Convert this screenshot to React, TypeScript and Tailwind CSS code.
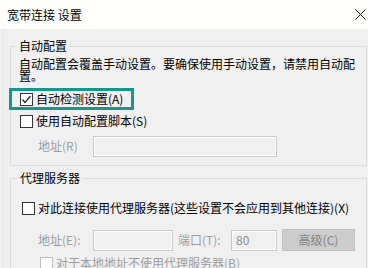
import React from 'react';

const font = "font-['Microsoft_YaHei','Noto_Sans_CJK_SC',sans-serif]";

const CheckBox: React.FC<{ checked?: boolean; disabled?: boolean }> = ({ checked, disabled }) => (
  <span
    className={`flex h-[13px] w-[13px] shrink-0 items-center justify-center border bg-white ${
      disabled ? 'border-[#bcbcbc]' : 'border-[#333333]'
    }`}
  >
    {checked && (
      <svg width="11" height="11" viewBox="0 0 11 11">
        <path d="M1.5 5.5 L4 8.5 L9.5 2" fill="none" stroke="#222" strokeWidth="1.2" />
      </svg>
    )}
  </span>
);

const TextBox: React.FC<{ w: string; value?: string }> = ({ w, value }) => (
  <div
    className={`${w} h-[21px] border border-[#c8c8c8] bg-[#f0f0f0] px-[4px] text-[#8c8c8c] shadow-[inset_0_0_0_1px_#ffffff] flex items-center`}
  >
    {value}
  </div>
);

const App: React.FC = () => {
  return (
    <div className={`h-[268px] w-[368px] overflow-hidden bg-[#f0f0f0] text-[12px] leading-[12px] text-black ${font}`}>
      <div className="flex h-[29px] items-center justify-between bg-[#fffffb] pl-[7px] pr-[2px]">
        <span>宽带连接 设置</span>
        <svg width="11" height="11" viewBox="0 0 11 11">
          <path d="M0.5 0.5 L10.5 10.5 M10.5 0.5 L0.5 10.5" stroke="#111" strokeWidth="1" />
        </svg>
      </div>

      <div className="ml-[3px] border-l border-[#ece4de] pl-[6px] pr-[1px] pt-[11px]">
        <fieldset className="border border-[#dcdcdc] pb-[8px] pl-[8px] pt-[6px]">
          <legend className="-ml-[2px] px-[2px] leading-[12px]">自动配置</legend>
          <p className="w-[340px] leading-[12px]">
            自动配置会覆盖手动设置。要确保使用手动设置，请禁用自动配置。
          </p>
          <div className="-ml-[10px] mt-[6px] flex h-[22px] w-[125px] items-center gap-[3px] border-[3px] border-[#16978d] pl-[8px]">
            <CheckBox checked />
            <span>自动检测设置(A)</span>
          </div>
          <div className="ml-[1px] flex h-[22px] items-center gap-[3px]">
            <CheckBox />
            <span>使用自动配置脚本(S)</span>
          </div>
          <div className="mt-[3px] flex h-[22px] items-center">
            <span className="ml-[19px] w-[55px] text-[#9d9d9d]">地址(R)</span>
            <TextBox w="w-[184px]" />
          </div>
        </fieldset>

        <fieldset className="mt-[6px] border border-[#dcdcdc] pb-[8px] pl-[8px] pt-[13px]">
          <legend className="-ml-[2px] ml-[-1px] px-[2px] leading-[12px]">代理服务器</legend>
          <div className="ml-[3px] flex h-[22px] items-center gap-[3px]">
            <CheckBox />
            <span>对此连接使用代理服务器(这些设置不会应用到其他连接)(X)</span>
          </div>
          <div className="mt-[10px] flex h-[22px] items-center">
            <span className="ml-[19px] w-[55px] text-[#9d9d9d]">地址(E):</span>
            <TextBox w="w-[80px]" />
            <span className="ml-[5px] w-[53px] text-[#9d9d9d]">端口(T):</span>
            <TextBox w="w-[46px]" value="80" />
            <div className="ml-[5px] flex h-[22px] w-[73px] items-center justify-center border border-[#bfbfbf] bg-[#cccccc] text-[#838383]">
              高级(C)
            </div>
          </div>
          <div className="mt-[1px] ml-[21px] flex h-[22px] items-center gap-[3px] text-[#9d9d9d]">
            <CheckBox disabled />
            <span>对于本地地址不使用代理服务器(B)</span>
          </div>
        </fieldset>
      </div>
    </div>
  );
};

export default App;
